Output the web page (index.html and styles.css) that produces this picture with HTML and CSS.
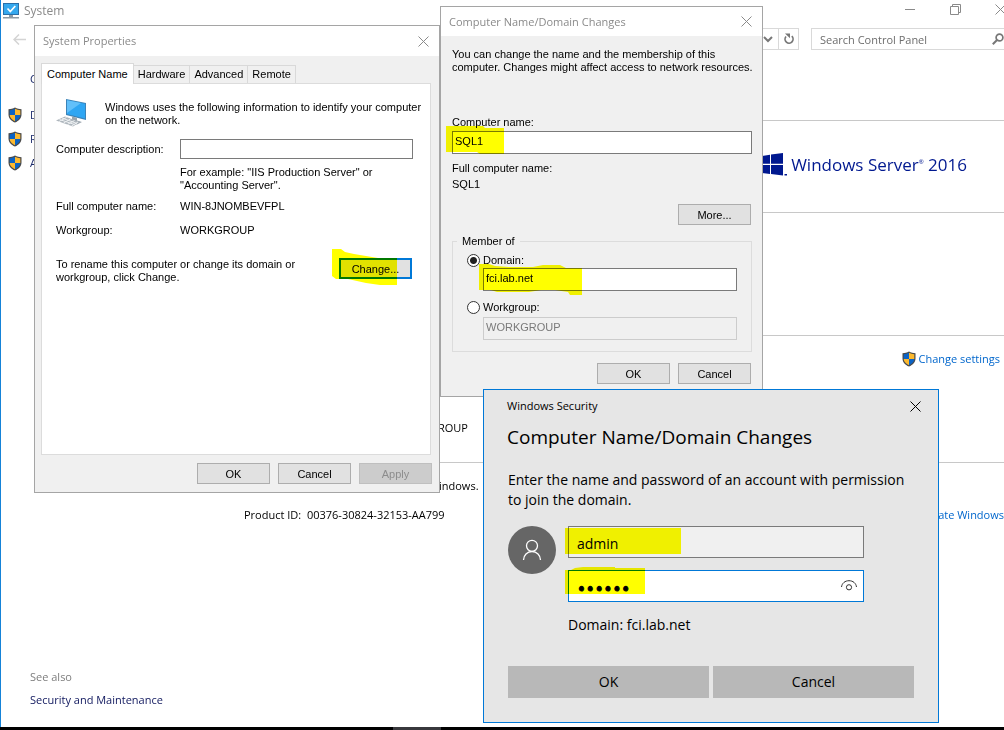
FILE: index.html
```html
<!DOCTYPE html>
<html lang="en">
<head>
<meta charset="utf-8">
<title>System</title>
<link rel="stylesheet" href="styles.css">
</head>
<body>
<svg class="defs" aria-hidden="true">
  <symbol id="shield" viewBox="0 0 14 16">
    <path d="M7 .4C5 1.6 2.800 2 .500 2.200v5.300c0 3.700 2.500 6.300 6.500 8.100 4-1.800 6.500-4.400 6.500-8.100V2.200C11.200 2 9 1.600 7 .4z" fill="#4a4a4a"/>
    <path d="M7 1.800C5.400 2.700 3.700 3.100 1.700 3.300V8H7z" fill="#0b63c5"/>
    <path d="M7 1.800c1.600.9 3.300 1.300 5.300 1.500V8H7z" fill="#fdb92e"/>
    <path d="M1.700 8c.2 2.700 2.100 4.800 5.300 6.300V8z" fill="#fdb92e"/>
    <path d="M12.300 8c-.2 2.700-2.100 4.800-5.300 6.300V8z" fill="#0b63c5"/>
  </symbol>
  <symbol id="cross" viewBox="0 0 11 11">
    <path d="M.5.5l10 10M10.500.5l-10 10" fill="none" stroke="currentColor"/>
  </symbol>
</svg>

<div class="desktop">
  <main class="system">
    <header class="system-title">
      <svg class="system-icon" width="16" height="16" viewBox="0 0 16 16" aria-hidden="true">
        <path d="M0 0h16v12H0z" fill="#2a6fa8"/><path d="M1 1h14v10H1z" fill="#35a8ee"/>
        <path d="M4.500 5.500l2.800 3 5-5.500" fill="none" stroke="#fff" stroke-width="1.700"/>
        <path d="M6 12h4v2H6z" fill="#8d9aa5"/><path d="M0 14h16v1.500H0z" fill="#8d9aa5"/>
      </svg>
      <h1>System</h1>
      <div class="system-controls">
        <button type="button" aria-label="Minimize"><svg width="11" height="11" viewBox="0 0 11 11"><path d="M0 5.500h10" stroke="currentColor"/></svg></button>
        <button type="button" aria-label="Restore"><svg width="11" height="11" viewBox="0 0 11 11"><path d="M.5 2.500h8v8h-8zM2.500 2.500v-2h8v8h-2" fill="none" stroke="currentColor"/></svg></button>
        <button type="button" aria-label="Close"><svg width="11" height="11"><use href="#cross"/></svg></button>
      </div>
    </header>
    <div class="toolbar">
      <button type="button" class="back" aria-label="Back"><svg width="14" height="11" viewBox="0 0 14 11"><path d="M6 .5l-5 5 5 5M1 5.500h12" fill="none" stroke="currentColor" stroke-width="1.500"/></svg></button>
      <div class="address">
        <button type="button" aria-label="Previous locations"><svg width="10" height="7" viewBox="0 0 10 7"><path d="M1 1l4 4 4-4" fill="none" stroke="currentColor" stroke-width="2"/></svg></button>
        <button type="button" aria-label="Refresh"><svg width="12" height="12" viewBox="0 0 12 12"><path d="M8.800 3.200A4 4 0 1 1 3 3.500" fill="none" stroke="currentColor" stroke-width="1.700"/><path d="M2 .5h5v4.800z" fill="currentColor"/></svg></button>
      </div>
      <div class="search">
        <input type="search" aria-label="Search Control Panel" placeholder="Search Control Panel">
        <svg width="12" height="12" viewBox="0 0 12 12" aria-hidden="true"><circle cx="7.500" cy="4.500" r="3.400" fill="none" stroke="currentColor" stroke-width="1.700"/><path d="M5 7L.8 11.200" stroke="currentColor" stroke-width="2"/></svg>
      </div>
    </div>
    <div class="system-body">
      <nav class="sidebar">
        <a class="home" href="#">C</a>
        <a href="#"><svg width="14" height="16"><use href="#shield"/></svg>D</a>
        <a href="#"><svg width="14" height="16"><use href="#shield"/></svg>R</a>
        <a href="#"><svg width="14" height="16"><use href="#shield"/></svg>A</a>
        <div class="see-also"><span>See also</span><a href="#">Security and Maintenance</a></div>
      </nav>
      <div class="details">
        <section class="basic"></section>
        <section class="edition">
          <div class="brand">
            <svg width="27" height="23" viewBox="0 0 27 23" aria-hidden="true"><g fill="#00188f"><path d="M0 3.200l10-1.400v9H0zM11 1.600L23 0v10.800H11zM0 12h10v9L0 19.600zM11 12h12v10.400L11 21z"/><path d="M24.500 21H27v1.500h-2.500z"/></g></svg>
            <span>Windows Server<sup>®</sup> 2016</span>
          </div>
        </section>
        <section class="hardware"></section>
        <section class="naming">
          <a class="settings" href="#"><svg width="14" height="16"><use href="#shield"/></svg>Change settings</a>
          <p class="group-name">ROUP</p>
        </section>
        <section class="activation">
          <p class="status">indows.</p>
          <div class="product"><span>Product ID:&nbsp; 00376-30824-32153-AA799</span><a href="#">ate Windows</a></div>
        </section>
      </div>
    </div>
  </main>
  <footer class="taskbar"><span></span></footer>

  <section class="dialog properties" aria-label="System Properties">
    <header class="dialog-title"><h2>System Properties</h2><button type="button" aria-label="Close"><svg width="11" height="11"><use href="#cross"/></svg></button></header>
    <div class="properties-body">
      <div class="tabs" role="tablist">
        <button type="button" role="tab" aria-selected="true">Computer Name</button>
        <button type="button" role="tab">Hardware</button>
        <button type="button" role="tab">Advanced</button>
        <button type="button" role="tab">Remote</button>
      </div>
      <div class="page" role="tabpanel">
        <div class="intro">
          <svg width="32" height="30" viewBox="0 0 32 30" aria-hidden="true">
            <path d="M10 1l20 4v17l-20-5z" fill="#3b83b8"/><path d="M11 2.200l18 3.600v14.800l-18-4.500z" fill="#2fa6f3"/><path d="M11 2.200l14 2.800-14 10z" fill="#62c0fa"/>
            <path d="M16 18.500l5 1.300v2.700l5 1.500-5 2.500-9-3 4-1.500z" fill="#9aa5ae"/>
            <path d="M9 18.500l15 5.500-7 4.500-17-6z" fill="#aeb6bd"/><path d="M6 20l15 5.500M3.500 21.500l15 5M10.500 19.500l-7.500 4M14.500 21l-7 4M18.500 22.500l-7 4M22 24l-6.500 4" stroke="#edf0f2" fill="none"/>
          </svg>
          <p>Windows uses the following information to identify your computer<br>on the network.</p>
        </div>
        <div class="field"><label for="description">Computer description:</label><input id="description" type="text"></div>
        <p class="hint">For example: "IIS Production Server" or<br>"Accounting Server".</p>
        <dl>
          <dt>Full computer name:</dt><dd>WIN-8JNOMBEVFPL</dd>
          <dt>Workgroup:</dt><dd>WORKGROUP</dd>
        </dl>
        <div class="rename">
          <p>To rename this computer or change its domain or<br>workgroup, click Change.</p>
          <div class="marked">
            <button type="button" class="button focused">Change...</button>
            <svg class="marker marker-change" width="65" height="36" viewBox="0 0 65 36"><path d="M0 0h9l4 3 9 2 12 2 12 2h19v27H48l-14-2-18-4H4l-4-3z"/></svg>
          </div>
        </div>
      </div>
      <div class="actions">
        <button type="button" class="button">OK</button>
        <button type="button" class="button">Cancel</button>
        <button type="button" class="button" disabled>Apply</button>
      </div>
    </div>
  </section>

  <section class="dialog changes" aria-label="Computer Name/Domain Changes">
    <header class="dialog-title"><h2>Computer Name/Domain Changes</h2><button type="button" aria-label="Close"><svg width="11" height="11"><use href="#cross"/></svg></button></header>
    <div class="changes-body">
      <p>You can change the name and the membership of this<br>computer. Changes might affect access to network resources.</p>
      <label class="name-label" for="computer-name">Computer name:</label>
      <div class="marked">
        <input id="computer-name" type="text" value="SQL1">
        <svg class="marker marker-name" width="58" height="28" viewBox="0 0 58 28"><path d="M0 0h37l2 2h19v26H34l-3-2H0z"/></svg>
      </div>
      <p class="full-label">Full computer name:</p>
      <p class="full-name">SQL1</p>
      <div class="more"><button type="button" class="button">More...</button></div>
      <fieldset>
        <legend>Member of</legend>
        <label class="choice"><input type="radio" name="member" checked>Domain:</label>
        <div class="marked member-field">
          <input type="text" aria-label="Domain" value="fci.lab.net">
          <svg class="marker marker-domain" width="103" height="31" viewBox="0 0 103 31"><path d="M0 0h10l6 2 14 1h24l10-2h17l6 3h16v27H91l-2-3-13-2H62l-12 2H18l-6-2H0z"/></svg>
        </div>
        <label class="choice second"><input type="radio" name="member">Workgroup:</label>
        <div class="member-field off"><input type="text" aria-label="Workgroup" value="WORKGROUP" disabled></div>
      </fieldset>
      <div class="actions">
        <button type="button" class="button">OK</button>
        <button type="button" class="button">Cancel</button>
      </div>
    </div>
  </section>

  <section class="security" aria-label="Windows Security">
    <header><span>Windows Security</span><button type="button" aria-label="Close"><svg width="11" height="11"><use href="#cross"/></svg></button></header>
    <h2>Computer Name/Domain Changes</h2>
    <p>Enter the name and password of an account with permission<br>to join the domain.</p>
    <div class="account">
      <svg width="48" height="48" viewBox="0 0 48 48" aria-hidden="true"><circle cx="24" cy="24" r="24" fill="#666"/><g fill="none" stroke="#fff" stroke-width="1.300"><circle cx="24" cy="19.800" r="5.500"/><path d="M15.500 34a8.500 8.500 0 0 1 17 0"/></g></svg>
      <div class="credentials">
        <div class="marked">
          <input type="text" aria-label="User name" value="admin">
          <svg class="marker marker-user" width="116" height="26" viewBox="0 0 116 26"><path d="M0 0h116v26H0z"/></svg>
        </div>
        <div class="marked">
          <input class="active" type="password" aria-label="Password" value="secret">
          <button type="button" class="reveal" aria-label="Show password"><svg width="16" height="11" viewBox="0 0 16 11"><path d="M.5 7C1 3.200 4 .7 8 .7S15 3.200 15.500 7" fill="none" stroke="currentColor"/><circle cx="8" cy="7.300" r="2.600" fill="none" stroke="currentColor"/></svg></button>
          <svg class="marker marker-password" width="80" height="28" viewBox="0 0 80 28"><path d="M0 3h6l4-2 8-1h32v1h30v26H0z"/></svg>
        </div>
        <span>Domain: fci.lab.net</span>
      </div>
    </div>
    <div class="security-actions"><button type="button">OK</button><button type="button">Cancel</button></div>
  </section>
</div>
</body>
</html>
```
FILE: styles.css
```css
* { box-sizing: border-box; }
body { margin: 0; font: 11px/16px "Open Sans", "Noto Sans", sans-serif; color: #000; }
h1, h2, p, dl, dd, fieldset { margin: 0; }
h1, h2 { font-weight: 400; }
button, input { font: inherit; color: inherit; }
button { padding: 0; border: 0; background: none; }
a { color: #0066cc; text-decoration: none; white-space: nowrap; }
svg { display: block; flex: none; }
.defs { position: absolute; width: 0; height: 0; }

.desktop { position: relative; display: flex; flex-direction: column; height: 100vh; min-height: 730px; overflow: hidden; background: #fff; }
.taskbar { display: flex; height: 3px; padding-left: 393px; background: #000; }
.taskbar span { width: 48px; background: #38383c; }

/* System window */
.system { flex: 1; display: flex; flex-direction: column; border-left: 1px solid #1583d8; overflow: hidden; }
.system-title { display: flex; align-items: center; height: 22px; padding-left: 2px; color: #8a8a8a; }
.system-title h1 { flex: 1; margin-left: 5px; font-size: 12px; }
.system-controls { display: flex; gap: 34px; height: 19px; margin: 0 -2px 3px 0; }
.toolbar { display: flex; align-items: center; height: 22px; margin-top: 6px; color: #777; }
.back { width: 34px; padding-left: 12px; color: #d4d4d4; }
.address { flex: 1; display: flex; justify-content: flex-end; height: 22px; border: 1px solid #d9d9d9; }
.address button { display: grid; place-items: center; width: 20px; }
.address button + button { border-left: 1px solid #d9d9d9; }
.search { display: flex; align-items: center; width: 193px; height: 22px; margin-left: 12px; padding-left: 8px; border: 1px solid #d9d9d9; border-right: 0; }
.search input { flex: 1; min-width: 0; height: 20px; padding: 0; border: 0; outline: 0; background: none; }
.search input::placeholder { color: #6d6d6d; opacity: 1; }
.system-body { flex: 1; display: grid; grid-template-columns: 243px 1fr; }
.sidebar { display: flex; flex-direction: column; gap: 8px; padding: 21px 0 19px 7px; }
.sidebar a { display: flex; gap: 8px; color: #1b2a6b; }
.sidebar .home { margin: 0 0 12px 22px; }
.see-also { display: flex; flex-direction: column; gap: 7px; margin: auto 0 0 22px; color: #7d7d7d; }
.see-also a { color: #10185e; }
.details section { border-bottom: 1px solid #c8c8c8; }
.details .basic { height: 71px; }
.details .edition { display: flex; justify-content: flex-end; align-items: center; height: 92px; padding: 0 37px 4px 0; }
.brand { display: flex; align-items: center; gap: 4px; color: #00188f; font-size: 17px; line-height: 26px; }
.brand sup { font-size: 6px; vertical-align: 7px; line-height: 6px; }
.details .hardware { height: 123px; }
.details .naming { height: 127px; padding: 15px 4px 0 0; }
.settings { display: flex; justify-content: flex-end; gap: 2px; }
.group-name { margin: 53px 0 0 194px; }
.details .activation { border: 0; padding-top: 15px; }
.status { margin-left: 195px; }
.product { display: flex; justify-content: space-between; margin-top: 13px; white-space: nowrap; }

/* Classic dialogs */
.dialog { position: absolute; border: 1px solid #a5a5a5; background: #f0f0f0; font: 11px/13px "Liberation Sans", Arial, sans-serif; white-space: nowrap; }
.dialog-title { display: flex; align-items: center; justify-content: space-between; padding: 0 10px 0 8px; background: #fff; color: #8a8a8a; font: 11px/16px "Open Sans", "Noto Sans", sans-serif; }
.dialog-title h2 { font-size: 11px; }
.dialog input[type="text"] { display: block; width: 100%; padding: 0 2px; border: 1px solid #7a7a7a; border-radius: 0; background: #fff; outline: 0; }
.dialog input:disabled { border-color: #ccc; background: #f0f0f0; color: #7a7a7a; }
.button { width: 73px; height: 21px; padding-top: 1px; border: 1px solid #adadad; background: #e1e1e1; text-align: center; }
.button:disabled { border-color: #bfbfbf; background: #ccc; color: #8d8d8d; }
.button.focused { border: 2px solid #0078d7; }
.actions { display: flex; justify-content: flex-end; gap: 8px; }
.marked { position: relative; }
.marker { position: absolute; fill: #ff0; mix-blend-mode: multiply; pointer-events: none; }

.properties { left: 34px; top: 25px; width: 406px; }
.properties .dialog-title { height: 30px; }
.properties-body { padding: 7px 7px 8px 6px; }
.tabs { display: flex; align-items: flex-end; }
.tabs button { height: 18px; padding: 0 4px; border: 1px solid #d9d9d9; border-width: 1px 1px 0 0; }
.tabs [aria-selected="true"] { z-index: 1; height: 21px; margin-bottom: -1px; padding: 0 5px; border-left-width: 1px; background: #fff; }
.page { min-height: 372px; margin-right: 1px; padding: 14px 17px 0 14px; border: 1px solid #dcdcdc; background: #fff; }
.intro { display: flex; gap: 17px; height: 32px; }
.intro p { padding-top: 3px; }
.field, .page dl { display: grid; grid-template-columns: 124px 1fr; }
.field { align-items: center; margin-top: 9px; }
.field input { height: 20px; }
.hint { margin: 7px 0 0 124px; }
.page dl { row-gap: 10px; margin-top: 7px; line-height: 14px; }
.rename { display: flex; justify-content: space-between; margin-top: 21px; padding-right: 1px; }
.properties .actions { margin-top: 8px; }
.marker-change { left: -7px; top: -9px; }

.changes { left: 440px; top: 6px; width: 323px; }
.changes .dialog-title { height: 29px; }
.changes-body { padding: 12px 10px 12px 11px; }
.name-label { display: block; margin: 41px 0 2px; line-height: 14px; }
.changes input[type="text"] { height: 23px; padding-bottom: 3px; }
.full-label { margin-top: 7px; line-height: 14px; }
.full-name { margin-top: 2px; line-height: 14px; }
.more { display: flex; justify-content: flex-end; margin-top: 13px; }
.changes fieldset { margin-top: 9px; padding: 5px 14px 11px; border: 1px solid #dcdcdc; }
.changes legend { margin-left: -10px; padding: 0 5px; line-height: 14px; }
.choice { display: flex; align-items: center; gap: 3px; line-height: 14px; }
.choice input { appearance: none; width: 13px; height: 13px; margin: 0; border: 1px solid #333; border-radius: 50%; background: #fff; }
.choice input:checked { border-color: #333; background: radial-gradient(circle, #222 0 3px, #fff 4px); }
.member-field { margin: 1px 0 0 16px; }
.second { margin-top: 9px; }
.off { margin-top: 3px; }
.changes .actions { margin-top: 11px; }
.changes .more, .changes .actions { padding-right: 1px; }
.marker-name { left: -6px; top: -5px; }
.marker-domain { left: -4px; top: -4px; }

/* Credential prompt */
.security { position: absolute; left: 483px; top: 389px; width: 456px; padding: 0 24px 24px; border: 1px solid #0078d7; background: #e6e6e6; font-size: 14px; line-height: 20px; white-space: nowrap; }
.security header { display: flex; align-items: center; justify-content: space-between; height: 32px; margin: 0 -7px 0 -1px; font-size: 11px; }
.security h2 { margin: 1px 0 19px -1px; font-size: 19px; line-height: 28px; }
.account { display: flex; gap: 12px; margin-top: 16px; }
.credentials { display: flex; flex-direction: column; gap: 12px; width: 296px; }
.credentials input { display: block; width: 100%; height: 32px; padding: 2px 8px 0; border: 1px solid #7a7a7a; border-radius: 0; background: #f0f0f0; outline: 0; }
.credentials .active { padding-top: 8px; border-color: #0078d7; background: #fff; font: 15px/20px "DejaVu Sans", sans-serif; -webkit-text-stroke: 1px #000; }
.credentials span { margin-top: 1px; }
.reveal { position: absolute; right: 7px; top: 10px; color: #333; }
.security-actions { display: grid; grid-template-columns: 1fr 1fr; gap: 4px; margin: 31px 0 0; }
.security-actions button { height: 32px; background: #b8b8b8; }
.marker-user { left: -3px; top: 2px; }
.marker-password { left: -3px; top: -3px; }
```
